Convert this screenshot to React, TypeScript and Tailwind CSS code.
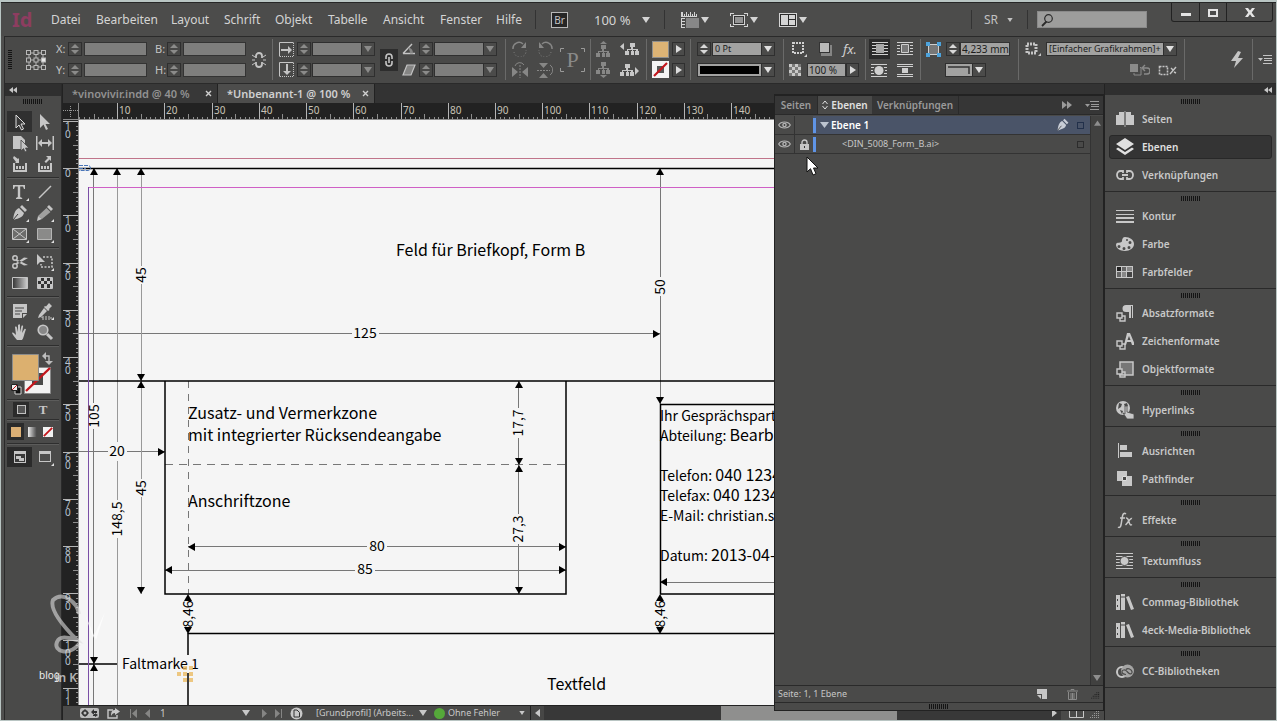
import React from 'react';

const UI = "font-['Noto_Sans','Open_Sans',sans-serif]";
const DOC = "font-['Noto_Sans_CJK_SC','Noto_Sans',sans-serif]";

/* ---------- small building blocks ---------- */

interface IconProps {
  children: React.ReactNode;
  size?: string;
  box?: string;
  className?: string;
}

const Icon: React.FC<IconProps> = ({ children, size = 'w-4 h-4', box = '0 0 16 16', className = '' }) => (
  <svg viewBox={box} className={`${size} shrink-0 ${className}`} fill="currentColor" aria-hidden="true">
    {children}
  </svg>
);

const Caret: React.FC<{ className?: string }> = ({ className = '' }) => (
  <svg viewBox="0 0 8 6" className={`h-[6px] w-[8px] shrink-0 ${className}`} fill="currentColor" aria-hidden="true">
    <path d="M0 0h8L4 6z" />
  </svg>
);

const Grip = () => (
  <svg className="h-[5px] w-5 shrink-0" viewBox="0 0 20 5" aria-hidden="true">
    {[0, 2, 4, 6, 8, 10, 12, 14, 16, 18].map((x) => (
      <rect key={x} x={x} width="1" height="5" fill="#141414" />
    ))}
  </svg>
);

const Sep: React.FC<{ className?: string }> = ({ className = '' }) => (
  <div className={`w-px shrink-0 self-stretch bg-[#6a6a69] ${className}`} />
);

const Stepper: React.FC<{ label: string; on?: boolean }> = ({ label, on }) => (
  <div
    className={`flex h-[14px] w-[14px] shrink-0 flex-col border border-[#2f2f2f] bg-[#484847] ${
      on ? 'text-[#d8d8d8]' : 'text-[#8b8b8a]'
    }`}
  >
    <button aria-label={`${label} erhöhen`} className="flex h-[6px] items-center justify-center">
      <Icon size="w-[8px] h-[4px]" box="0 0 8 4"><path d="M0 4L4 0l4 4z" /></Icon>
    </button>
    <button aria-label={`${label} verringern`} className="flex h-[6px] items-center justify-center">
      <Icon size="w-[8px] h-[4px]" box="0 0 8 4"><path d="M0 0h8L4 4z" /></Icon>
    </button>
  </div>
);

interface FieldProps {
  label: string;
  width: string;
  value?: string;
}

const Field: React.FC<FieldProps> = ({ label, width, value }) => (
  <input
    aria-label={label}
    defaultValue={value}
    className={`h-[14px] shrink-0 border border-[#333] pl-px text-[10px] leading-3 text-[#1c1c1c] ${width} ${
      value ? 'bg-[#a2a2a1]' : 'bg-[#7e7e7d]'
    }`}
  />
);

const Combo: React.FC<FieldProps & { children?: React.ReactNode }> = ({ label, width, value, children }) => {
  const on = Boolean(value || children);
  return (
    <div className={`relative h-[14px] shrink-0 ${width}`}>
      <select
        aria-label={label}
        className={`block h-[14px] w-full appearance-none border border-[#2f2f2f] pl-[2px] text-[9px] leading-3 text-[#1c1c1c] ${
          on ? 'bg-[#a2a2a1]' : 'bg-[#7e7e7d]'
        }`}
      >
        <option>{value}</option>
      </select>
      {children}
      <span
        className={`pointer-events-none absolute inset-y-0 right-0 flex w-[14px] items-center justify-center border border-[#2f2f2f] bg-[#4b4b4a] ${
          on ? 'text-[#e0e0e0]' : 'text-[#8b8b8a]'
        }`}
      >
        <Caret />
      </span>
    </div>
  );
};

const PlayButton: React.FC<{ label: string; height: string }> = ({ label, height }) => (
  <button
    aria-label={label}
    className={`flex w-[13px] shrink-0 items-center justify-center border border-[#2f2f2f] bg-[#4b4b4a] text-[#dcdcdc] ${height}`}
  >
    <Icon size="w-[6px] h-[8px]" box="0 0 6 8"><path d="M0 0l6 4-6 4z" /></Icon>
  </button>
);

/* two stacked rows of the control bar */
const Rows: React.FC<{ children: React.ReactNode; className?: string }> = ({ children, className = '' }) => (
  <div className={`flex shrink-0 flex-col [&>*]:flex [&>*]:h-[21px] [&>*]:items-center ${className}`}>{children}</div>
);

/* ---------- menu bar ---------- */

const menus = [
  { label: 'Datei', width: 'w-[45px]' },
  { label: 'Bearbeiten', width: 'w-[75px]' },
  { label: 'Layout', width: 'w-[53px]' },
  { label: 'Schrift', width: 'w-[51px]' },
  { label: 'Objekt', width: 'w-[53px]' },
  { label: 'Tabelle', width: 'w-[55px]' },
  { label: 'Ansicht', width: 'w-[57px]' },
  { label: 'Fenster', width: 'w-[56px]' },
  { label: 'Hilfe', width: 'w-[39px]' },
];

const MenuBar = () => (
  <header className="flex h-[33px] shrink-0 items-center bg-[#4c4c4b] text-[#d4d4d4]">
    <span className="ml-[11px] w-[39px] text-[20px] font-bold leading-6 text-[#8d3d60]">Id</span>
    <nav className="flex">
      {menus.map((menu) => (
        <button key={menu.label} className={`whitespace-nowrap text-left text-[12px] leading-4 ${menu.width}`}>
          {menu.label}
        </button>
      ))}
    </nav>
    <Sep className="my-[7px] bg-[#333]" />
    <button className="ml-[15px] h-4 w-[17px] border border-[#b8b8b8] bg-[#262626] text-[10px] leading-3 text-[#c4c4c4]">
      Br
    </button>
    <button className="ml-[26px] flex items-center whitespace-nowrap text-[13px] leading-4">
      <span className="w-[48px] text-left">100 %</span>
      <Caret className="w-[7px]" />
    </button>
    <Sep className="my-[7px] ml-[14px] bg-[#333]" />
    <button aria-label="Anzeigeoptionen" className="ml-4 flex items-center gap-[2px]">
      <Icon size="w-[18px] h-4" box="0 0 18 16">
        <path d="M0 0h2v4h1V2h1v2h1V0h1v4h1V2h1v2h1V0h1v4h1V2h1v2h1V0h1v4h1V2h1v3H0z" />
        <path d="M0 6h4v1H1v2h3v1H1v2h3v1H1v2h3v1H0z" />
        <path d="M5 6h13v10H5z" fill="#878787" />
      </Icon>
      <Caret className="w-[7px]" />
    </button>
    <button aria-label="Bildschirmmodus" className="ml-[21px] flex items-center gap-[2px]">
      <Icon size="w-[18px] h-4" box="0 0 18 16">
        <path d="M0 4V1h4v1H1v2zM14 1h4v3h-1V2h-3zM0 12v3h4v-1H1v-2zM14 15h4v-3h-1v2h-3z" />
        <path d="M3 3h12v10H3z" />
        <path d="M4 4h10v8H4z" fill="#333" />
        <path d="M5 5h8v6H5z" fill="#939393" />
      </Icon>
      <Caret className="w-[7px]" />
    </button>
    <button aria-label="Dokumente anordnen" className="ml-[21px] flex items-center gap-[2px]">
      <Icon size="w-[18px] h-4" box="0 0 18 16">
        <path d="M0 1h18v14H0z" />
        <path d="M1 2h16v12H1z" fill="#2b2b2b" />
        <path d="M2 3h7v10H2zM10 3h6v4h-6zM10 8h6v5h-6z" />
      </Icon>
      <Caret className="w-[7px]" />
    </button>
    <div className="flex-1" />
    <Sep className="my-[7px] bg-[#333]" />
    <button className="ml-3 flex items-center text-[12px] leading-4 text-[#c2c2c2]">
      <span className="w-[23px] text-left">SR</span>
      <Icon size="w-[6px] h-[4px]" box="0 0 8 6"><path d="M0 0h8L4 6z" /></Icon>
    </button>
    <Sep className="my-[7px] ml-[14px] bg-[#333]" />
    <label className="ml-[9px] flex h-[17px] w-[110px] items-center border border-[#8a8a8a] bg-[#9d9d9c] text-[#2a2a2a]">
      <Icon size="w-[14px] h-[14px]" box="0 0 14 14" className="ml-[2px]">
        <path d="M6.500 8.500L2 13" stroke="currentColor" strokeWidth="1.800" />
        <circle cx="8.500" cy="5.500" r="3.800" fill="none" stroke="currentColor" strokeWidth="1.200" />
      </Icon>
      <input aria-label="Suche" className="w-full min-w-0 bg-transparent text-[11px] outline-none" />
    </label>
    <div className="ml-6 mr-[3px] flex h-[19px] self-start rounded-b-[3px] border border-t-0 border-[#222] text-[#e4e4e4]">
      <button aria-label="Minimieren" className="flex w-7 items-center justify-center border-r border-[#222]">
        <Icon size="w-[10px] h-[9px]" box="0 0 10 9"><path d="M0 5h10v3H0z" /></Icon>
      </button>
      <button aria-label="Maximieren" className="flex w-[27px] items-center justify-center border-r border-[#222]">
        <Icon size="w-[10px] h-[9px]" box="0 0 10 9"><path d="M0 1h10v8H0zm2 2v4h6V3z" fillRule="evenodd" /></Icon>
      </button>
      <button aria-label="Schließen" className="flex w-[45px] items-center justify-center">
        <Icon size="w-[10px] h-[9px]" box="0 0 10 9"><path d="M0 0h3l2 2.600L7 0h3L6.700 4.500 10 9H7L5 6.300 3 9H0l3.300-4.500z" /></Icon>
      </button>
    </div>
  </header>
);

/* ---------- control bar ---------- */

const Tree = () => (
  <path d="M5 2h5v4H8v2h5v2h1v4h-4v-4h1V9H8v1h1v4H6v-4h1V9H3v1h1v4H0v-4h2V8h4V6H5z" />
);

const ControlBar = () => (
  <section aria-label="Steuerung" className="ml-[3px] flex h-12 shrink-0 items-stretch border-y border-l border-[#2a2a2a] bg-[#494948] pb-[3px] pt-[2px] text-[#c4c4c4]">
    <div className="ml-[3px] flex w-[15px] shrink-0 items-center">
      <svg className="h-5 w-[4px]" viewBox="0 0 4 20" aria-hidden="true">
        {[0, 2, 4, 6, 8, 10, 12, 14, 16, 18].map((y) => (
          <rect key={y} y={y} width="4" height="1" fill="#141414" />
        ))}
      </svg>
    </div>
    <Icon size="w-5 h-5" box="0 0 20 20" className="ml-[3px] self-center text-[#b8b8b8]">
      <path d="M3 3h14v14H3zM10 3v14M3 10h14" fill="none" stroke="currentColor" />
      {[2.5, 10, 17.5].map((x) =>
        [2.5, 10, 17.5].map((y) => (
          <rect key={`${x}-${y}`} x={x - 2} y={y - 2} width="4" height="4" fill={x > 15 && y === 10 ? '#e8e8e8' : '#494948'} stroke="currentColor" />
        ))
      )}
    </Icon>
    <Rows className="ml-[10px] text-[11px] leading-3">
      <div><span className="w-3">X:</span><Stepper label="X" /><span className="w-[2px]" /><Field label="X" width="w-[63px]" /></div>
      <div><span className="w-3">Y:</span><Stepper label="Y" /><span className="w-[2px]" /><Field label="Y" width="w-[63px]" /></div>
    </Rows>
    <Rows className="ml-[8px] text-[11px] leading-3">
      <div><span className="w-3">B:</span><Stepper label="Breite" /><span className="w-[2px]" /><Field label="Breite" width="w-[63px]" /></div>
      <div><span className="w-3">H:</span><Stepper label="Höhe" /><span className="w-[2px]" /><Field label="Höhe" width="w-[63px]" /></div>
    </Rows>
    <button aria-label="Proportionen verknüpfen" className="ml-[6px]">
      <Icon size="w-[14px] h-4" box="0 0 14 16">
        <path d="M4 6V4a3 3 0 016 0v2M4 10v2a3 3 0 006 0v-2" fill="none" stroke="currentColor" strokeWidth="1.800" />
        <path d="M0 3l3 2M0 8h3M0 13l3-2M14 3l-3 2M14 8h-3M14 13l-3-2" stroke="currentColor" />
      </Icon>
    </button>
    <Sep className="ml-[6px]" />
    <Rows className="ml-[6px]">
      {['horizontal', 'vertikal'].map((dir) => (
        <div key={dir}>
          <Icon size="w-[15px] h-[15px]" box="0 0 15 15" className="mr-[3px]">
            <path d="M.5 14.500V.5h14" fill="none" stroke="currentColor" />
            <path d="M14.500 1v13.500H1" fill="none" stroke="currentColor" strokeDasharray="1 1" />
            {dir === 'horizontal' ? <path d="M2 7h7V4l4 4-4 4V9H2z" /> : <path d="M7 2h2v7h3l-4 4-4-4h3z" />}
          </Icon>
          <Stepper label={`Skalierung ${dir}`} />
          <span className="w-px" />
          <Combo label={`Skalierung ${dir}`} width="w-[63px]" />
        </div>
      ))}
    </Rows>
    <button aria-label="Skalierung verketten" className="ml-[5px] flex h-[22px] w-[18px] shrink-0 items-center justify-center self-center bg-[#2d2d2d]">
      <Icon size="w-[10px] h-[14px]" box="0 0 10 14">
        <path d="M2 6V4a3 3 0 016 0v2M2 8v2a3 3 0 006 0V8M5 4v6" fill="none" stroke="currentColor" strokeWidth="1.600" />
      </Icon>
    </button>
    <Rows className="ml-1">
      <div>
        <Icon size="w-[15px] h-[14px]" box="0 0 15 14"><path d="M1 11.500L10 2M1 11.500h12" fill="none" stroke="currentColor" strokeWidth="1.400" /><path d="M6 6.500l1-1c3 1 4 3 4 6H8c0-2-.5-4-2-5z" fill="#858584" /></Icon>
        <span className="w-[2px]" /><Stepper label="Drehwinkel" /><span className="w-px" />
        <Combo label="Drehwinkel" width="w-[63px]" />
      </div>
      <div>
        <Icon size="w-[15px] h-[14px]" box="0 0 15 14"><path d="M5 2h8L9 12H1z" fill="#858584" stroke="currentColor" strokeWidth="1.200" /></Icon>
        <span className="w-[2px]" /><Stepper label="Scherwinkel" /><span className="w-px" />
        <Combo label="Scherwinkel" width="w-[63px]" />
      </div>
    </Rows>
    <Sep className="ml-[8px]" />
    <Rows className="ml-[6px] text-[#878786]">
      <div className="gap-[9px]">
        <Icon><path d="M1 8a6 6 0 0110-5" fill="none" stroke="currentColor" strokeWidth="1.500" /><path d="M14 1v6H9z" /><path d="M2 11a6 6 0 0012-2" fill="none" stroke="currentColor" strokeDasharray="1 2" /></Icon>
        <Icon><path d="M15 8A6 6 0 005 3" fill="none" stroke="currentColor" strokeWidth="1.500" /><path d="M2 1v6h5z" /><path d="M14 11a6 6 0 01-12-2" fill="none" stroke="currentColor" strokeDasharray="1 2" /></Icon>
      </div>
      <div className="gap-[9px]">
        <Icon><path d="M0 5v10l6-5zM16 5v10l-6-5z" /><path d="M8 3v13" stroke="currentColor" strokeDasharray="2 1" /><path d="M3 4a5 5 0 019-1" fill="none" stroke="currentColor" /></Icon>
        <Icon><path d="M2 1h9L6.500 6zM2 16h9l-4.500-5z" /><path d="M0 8.500h13" stroke="currentColor" strokeDasharray="2 1" /><path d="M13 3a6 6 0 010 10" fill="none" stroke="currentColor" /></Icon>
      </div>
    </Rows>
    <div className="ml-[7px] flex w-[25px] shrink-0 items-center justify-center self-center font-['Liberation_Serif',serif] text-[22px] leading-6 text-[#8a8a89]">
      <span className="relative">
        P
        <svg className="absolute -left-[6px] top-0 h-6 w-[25px]" viewBox="0 0 25 24" aria-hidden="true">
          <path d="M.5 4V.5H4M21 .5h3.500V4M.5 20v3.500H4M21 23.500h3.500V20" fill="none" stroke="#9a9a99" />
        </svg>
      </span>
    </div>
    <Sep className="ml-[5px]" />
    <Rows className="ml-[5px] text-[#878786]">
      <div className="gap-[8px]">
        <Icon><path d="M4 3l3.500-3L11 3z" /><g transform="translate(0 2)"><Tree /></g></Icon>
        <Icon size="w-[19px] h-4" box="0 0 19 16" className="text-[#c8c8c8]"><path d="M4 2v7L0 5.500z" /><g transform="translate(5 0)"><Tree /></g></Icon>
      </div>
      <div className="gap-[8px]">
        <Icon><g transform="translate(0 -2)"><Tree /></g><path d="M4 13h7l-3.500 3z" /></Icon>
        <Icon size="w-[19px] h-4" box="0 0 19 16" className="text-[#c8c8c8]"><Tree /><path d="M15 5v8l4-4z" /></Icon>
      </div>
    </Rows>
    <Sep className="ml-[7px]" />
    <Rows className="ml-[5px]">
      <div className="gap-[3px]">
        <button aria-label="Fläche" className="h-[17px] w-[17px] border border-[#8e8e8d] bg-[#dcb375]" />
        <PlayButton label="Flächenfarbe wählen" height="h-[14px]" />
      </div>
      <div className="gap-[3px]">
        <button aria-label="Kontur">
          <Icon size="w-[17px] h-[17px]" box="0 0 17 17">
            <path d="M0 0h17v17H0z" fill="#f4f4f4" /><path d="M5 5h7v7H5z" fill="#585857" />
            <path d="M2 15L15 2" stroke="#c4161c" strokeWidth="2.200" />
          </Icon>
        </button>
        <PlayButton label="Konturfarbe wählen" height="h-[14px]" />
      </div>
    </Rows>
    <Sep className="ml-[5px]" />
    <Rows className="ml-[6px]">
      <div><Stepper label="Konturstärke" on /><span className="w-px" /><Combo label="Konturstärke" width="w-[63px]" value="0 Pt" /></div>
      <div>
        <Combo label="Konturtyp" width="w-[78px]" value=" ">
          <span className="pointer-events-none absolute bottom-[3px] left-[3px] right-4 top-[3px] bg-black" />
        </Combo>
      </div>
    </Rows>
    <Sep className="ml-[8px]" />
    <Rows className="ml-[5px] w-[72px] text-[#d0d0d0]">
      <div className="gap-[10px] pl-[2px]">
        <Icon><path d="M2 2h10v10H2z" fill="none" stroke="currentColor" strokeWidth="2" strokeDasharray="2 1" /><path d="M16 16h-3l3-3z" /></Icon>
        <Icon><path d="M4 4h11v11H4z" fill="#858584" /><path d="M2 1h11v11H2z" fill="#333" /><path d="M3 2h9v9H3z" fill="#b9b9b8" /></Icon>
        <span className="text-[13px] italic leading-4">fx.</span>
      </div>
      <div>
        <Icon size="w-[12px] h-[12px]" box="0 0 12 12">
          <path d="M0 0h12v12H0z" fill="#c9c9c8" />
          <path d="M3 0h3v3H3zM9 0h3v3H9zM0 3h3v3H0zM6 3h3v3H6zM3 6h3v3H3zM9 6h3v3H9zM0 9h3v3H0zM6 9h3v3H6z" fill="#7a7a79" />
        </Icon>
        <span className="w-[6px]" />
        <Field label="Deckkraft" width="w-[39px]" value="100 %" />
        <PlayButton label="Deckkraft wählen" height="h-[14px]" />
      </div>
    </Rows>
    <Sep className="ml-1" />
    <Rows className="ml-[3px] text-[#cfcfcf]">
      <div className="gap-[7px]">
        <span className="flex h-5 w-[21px] items-center justify-center bg-[#2b2b2b]">
          <Icon><path d="M0 1h16v1H0zM0 4h16v1H0zM0 7h16v1H0zM0 10h16v1H0zM0 13h16v1H0z" /><path d="M4 3h8v9H4z" fill="#a8a8a8" /></Icon>
        </span>
        <Icon><path d="M0 1h16v1H0zM0 13h16v1H0zM0 4h3v1H0zM0 7h3v1H0zM0 10h3v1H0zM13 4h3v1h-3zM13 7h3v1h-3zM13 10h3v1h-3z" /><path d="M4.500 3.500h7v8h-7z" fill="#777" stroke="currentColor" /></Icon>
      </div>
      <div className="gap-[10px] pl-[2px]">
        <Icon><path d="M0 2h16v1H0zM0 14h16v1H0zM0 5h3v1H0zM0 8h2v1H0zM0 11h3v1H0zM13 5h3v1h-3zM14 8h2v1h-2zM13 11h3v1h-3z" /><circle cx="8" cy="8.500" r="4.500" /></Icon>
        <Icon><path d="M0 2h16v1H0zM0 4h16v1H0zM0 12h16v1H0zM0 14h16v1H0zM5 6h6v5H5z" /></Icon>
      </div>
    </Rows>
    <Sep className="ml-[7px]" />
    <Rows className="ml-[5px]">
      <div>
        <Icon size="w-[15px] h-[15px]" box="0 0 15 15" className="mr-[5px]">
          <path d="M2.500 2.500h10v10h-10z" fill="#777" stroke="#cfcfcf" />
          <path d="M0 0h4v4H0zM11 0h4v4h-4zM0 11h4v4H0zM11 11h4v4h-4z" fill="#4da3dc" />
        </Icon>
        <Stepper label="Eckenradius" on /><Field label="Eckenradius" width="w-[50px]" value="4,233 mm" />
      </div>
      <div className="pl-[19px]">
        <Combo label="Eckenform" width="w-[41px]" value=" ">
          <svg className="pointer-events-none absolute left-[3px] top-[3px] h-2 w-6" viewBox="0 0 24 8" aria-hidden="true">
            <path d="M0 1h21v7" fill="none" stroke="#333" strokeWidth="1.500" />
          </svg>
        </Combo>
      </div>
    </Rows>
    <Sep className="ml-[8px]" />
    <Rows className="ml-[6px] w-[152px]">
      <div>
        <Icon size="w-[17px] h-4" box="0 0 17 16" className="mr-1">
          <path d="M2 3h9v9H2z" fill="none" stroke="currentColor" strokeWidth="3" strokeDasharray="2 1" /><path d="M16 15h-3l3-3z" />
        </Icon>
        <Combo label="Objektformat" width="w-[131px]" value="[Einfacher Grafikrahmen]+" />
      </div>
      <div className="justify-end gap-[8px]">
        <Icon size="w-[21px] h-[14px]" box="0 0 21 14" className="text-[#8b8b8a]">
          <path d="M1 1h8v8H1z" /><path d="M11 4.500h1V12H5v-2" fill="none" stroke="currentColor" />
          <path d="M14 5h4a2.500 2.500 0 010 6h-3M16 2l-3 3 3 3" fill="none" stroke="currentColor" strokeWidth="1.400" />
        </Icon>
        <Icon size="w-[19px] h-[14px]" box="0 0 19 14">
          <path d="M1.500 3.500h8v8h-8z" fill="none" stroke="currentColor" strokeWidth="1.600" strokeDasharray="2 1" />
          <path d="M12 11l6-7M13 5l2 2M16 9l2 1" stroke="currentColor" strokeWidth="1.400" />
        </Icon>
      </div>
    </Rows>
    <Sep className="ml-[7px]" />
    <div className="flex-1" />
    <button aria-label="Schnell anwenden" className="mr-[9px]">
      <Icon size="w-[12px] h-[17px]" box="0 0 12 17"><path d="M7 0L0 10h5l-2 7 9-10H7l3-6z" /></Icon>
    </button>
    <Sep />
    <button aria-label="Bedienfeldmenü" className="ml-[5px] mr-[4px]">
      <Icon size="w-[14px] h-[9px]" box="0 0 14 9"><path d="M0 3h5L2.500 6zM5 0h9v1H5zM6 3h8v1H6zM6 5h8v1H6zM5 8h9v1H5z" /></Icon>
    </button>
  </section>
);

/* ---------- tool box ---------- */

interface Tool {
  name: string;
  art: React.ReactNode;
  active?: boolean;
}

const Flag = () => <path d="M18 18h-3l3-3z" fill="#e0e0e0" />;

const toolGroups: Tool[][] = [
  [
    { name: 'Auswahl', active: true, art: <path d="M5 2v13l3-3 2.500 5 2-1-2.500-5h4z" fill="#3a3a3a" stroke="#ddd" /> },
    { name: 'Direktauswahl', art: <path d="M4 1v14l3.500-3.500L10 17l2-1-2.500-5H14z" /> },
    { name: 'Seite', art: <><path d="M2 2h8l4 4v9H2z" /><path d="M10 6v11l2.500-2.500L14 18l2-1-1.500-3H18z" stroke="#444" strokeWidth=".8" /></> },
    { name: 'Lücke', art: <path d="M0 2h1.500v14H0zM16.500 2H18v14h-1.500zM2 9l4-4v3h6V5l4 4-4 4v-3H6v3z" /> },
    { name: 'Inhaltsaufnahme', art: <><path d="M2 8h2v7h10V8h2v9H2z" /><path d="M5 11h2v3H5zM8 11h2v3H8zM11 11h2v3h-2zM3 1l4 3 1-1v5H4l1-1-3-4z" /></> },
    { name: 'Inhaltsplatzierung', art: <><path d="M2 8h2v7h10V8h2v9H2z" /><path d="M5 11h2v3H5zM8 11h2v3H8zM11 11h2v3h-2zM10 1h5v5l-1.500-1.500L10 8 8.500 6.500 12 3z" /></> },
  ],
  [
    { name: 'Text', art: <><path d="M2 2h12v4h-1l-1-2.500H9.200V14l2 1v1H5v-1l1.800-1V3.500H4L3 6H2z" /><Flag /></> },
    { name: 'Linie', art: <path d="M3 15L15 3" stroke="currentColor" strokeWidth="1.500" /> },
    { name: 'Zeichenstift', art: <><path d="M11 1l5 5-2 2-5-5zM8 4l5 5c-1 4-4 5-11 7 1-7 2-10 6-12z" /><path d="M2 16l5-6" stroke="#3c3c3c" /><Flag /></> },
    { name: 'Buntstift', art: <><path d="M13 1l4 4-2 2-4-4z" /><path d="M10.500 4l4 4L6 15l-4-3z" fill="#a0a09f" /><path d="M2 12l4 3-5 2z" /><Flag /></> },
    { name: 'Rechteckrahmen', art: <><path d="M1.500 3.500h14v11h-14zM2 4l13 10M15 4L2 14" fill="#6c6c6b" stroke="currentColor" /><Flag /></> },
    { name: 'Rechteck', art: <><path d="M1.500 3.500h14v11h-14z" fill="#8a8a89" stroke="#b5b5b4" /><Flag /></> },
  ],
  [
    { name: 'Schere', art: <><circle cx="4" cy="5" r="2.200" fill="none" stroke="currentColor" strokeWidth="1.500" /><circle cx="4" cy="13" r="2.200" fill="none" stroke="currentColor" strokeWidth="1.500" /><path d="M5 6l12 6-4 .5L5 8zM5 12l12-7-4-.5L5 10z" /></> },
    { name: 'Frei transformieren', art: <><path d="M1 1v11l3-3 5 0z" /><path d="M7 4h9v10H5v-3" fill="none" stroke="currentColor" strokeWidth="1.600" strokeDasharray="2 1.500" /><Flag /></> },
    { name: 'Verlaufsfarbfeld', art: <path d="M1.500 3.500h15v11h-15z" fill="url(#fade)" stroke="#c4c4c4" /> },
    { name: 'Weiche Verlaufskante', art: <><path d="M1.500 3.500h15v11h-15z" fill="#333" stroke="#c4c4c4" /><path d="M2 4h3v3H2zM8 4h3v3H8zM14 4h2v3h-2zM5 7h3v3H5zM11 7h3v3h-3zM2 10h3v4H2zM8 10h3v4H8zM14 10h2v4h-2z" /></> },
  ],
  [
    { name: 'Notiz', art: <><path d="M2 2h14v9h-5v5H2zM12 12h4l-4 4z" /><path d="M4 6h9M4 9h7M4 12h5" stroke="#444" /></> },
    { name: 'Pipette', art: <><path d="M13 1l3 3-3 3 .5 1-1.500 1L8 5l1-1 1 .5zM8 6l3 3-6 6-3 1 1-3z" /><path d="M6 15h9v2H6z" fill="none" stroke="currentColor" strokeDasharray="2 1" /><Flag /></> },
    { name: 'Hand', art: <path d="M6 17c-2-2-4-5-5-7 1-1 2 0 4 2L4 4c1-1 2 0 2 1l1 4V2c1-1 2-1 2 0v7l1.500-6c1-1 2 0 1.500 1l-1 6 2.500-4c1-.5 2 .5 1 1.500-1.500 4-2 8-3.500 9.500z" /> },
    { name: 'Zoom', art: <><circle cx="7" cy="7" r="4.800" fill="#888" stroke="currentColor" strokeWidth="1.600" /><path d="M11 11l5 5" stroke="currentColor" strokeWidth="3" /></> },
  ],
];

const ToolLine = () => <div className="my-[3px] h-px w-full bg-[#2e2e2e] shadow-[0_1px_0_#5c5c5b]" />;

const NoneMark: React.FC<{ size: string }> = ({ size }) => (
  <Icon size={size} box="0 0 12 12">
    <path d="M0 0h12v12H0z" fill="#f2f2f2" />
    <path d="M1 11L11 1" stroke="#c4161c" strokeWidth="2.200" />
  </Icon>
);

const ToolBox = () => (
  <aside aria-label="Werkzeuge" className="ml-[3px] flex w-[58px] shrink-0 flex-col border-x border-[#2a2a2a] bg-[#4a4a49] text-[#c6c6c6]">
    <svg className="absolute h-0 w-0" aria-hidden="true">
      <defs>
        <linearGradient id="fade"><stop offset="0" stopColor="#333" /><stop offset="1" stopColor="#d0d0d0" /></linearGradient>
      </defs>
    </svg>
    <button aria-label="Werkzeuge reduzieren" className="flex h-3 items-center bg-[#2f2f2f] pl-1">
      <Icon size="w-[8px] h-[6px]" box="0 0 8 6"><path d="M4 0v6L0 3zM8 0v6L4 3z" /></Icon>
    </button>
    <div className="flex h-[15px] items-start justify-center pt-[3px]"><Grip /></div>
    <div className="flex flex-col px-[2px]">
      {toolGroups.map((group, i) => (
        <React.Fragment key={i}>
          <div className="grid grid-cols-[25px_25px]">
            {group.map((tool) => (
              <button
                key={tool.name}
                aria-label={tool.name}
                className={`flex h-[21px] items-center justify-center ${tool.active ? 'bg-[#303030]' : ''}`}
              >
                <Icon size="w-[18px] h-[18px]" box="0 0 18 18">{tool.art}</Icon>
              </button>
            ))}
          </div>
          <ToolLine />
        </React.Fragment>
      ))}
      <div className="flex h-[47px] items-center">
        <svg className="ml-[3px] h-[46px] w-[44px]" viewBox="0 0 44 46" role="img" aria-label="Fläche und Kontur">
          <path d="M14.500 17.500h26v26h-26z" fill="#f2f2f2" stroke="#8a8a8a" />
          <path d="M22 23h11v12H22z" fill="#4a4a49" />
          <path d="M16 41l24-23" stroke="#c4161c" strokeWidth="2.400" />
          <path d="M2.500 4.500h26v26h-26z" fill="#dcb06f" stroke="#8c8c8b" strokeWidth="1" />
          <path d="M35 6h4v6" fill="none" stroke="#bdbdbd" strokeWidth="1.400" />
          <path d="M36 2v8l-4-4zM35 11h8l-4 4z" fill="#bdbdbd" />
          <path d="M5 37h6v7H5z" fill="#111" stroke="#d5d5d5" />
          <path d="M1.500 34.500h6v6h-6z" fill="#eee" stroke="#222" />
          <path d="M2 40l5-5" stroke="#c4161c" />
        </svg>
      </div>
      <ToolLine />
      <div className="flex h-[13px] items-center gap-[6px] pl-[6px]">
        <button aria-label="Formatierung wirkt sich auf Rahmen aus" className="flex h-[15px] w-4 items-center justify-center bg-[#2b2b2b]">
          <span className="h-[9px] w-[9px] border border-[#c0c0c0] bg-[#555]" />
        </button>
        <button aria-label="Formatierung wirkt sich auf Text aus" className="w-4 font-['Liberation_Serif',serif] text-[13px] font-bold leading-3">T</button>
      </div>
      <ToolLine />
      <div className="flex h-[17px] items-center">
        <button aria-label="Farbe anwenden" className="flex h-[17px] w-[17px] items-center justify-center bg-[#2b2b2b]">
          <span className="h-[10px] w-[10px] bg-[#dcb075]" />
        </button>
        <button aria-label="Verlauf anwenden" className="flex h-4 w-4 items-center justify-center">
          <span className="h-[10px] w-[9px] bg-gradient-to-r from-[#eee] to-[#444]" />
        </button>
        <button aria-label="Keine anwenden" className="flex h-4 w-4 items-center justify-center"><NoneMark size="w-[10px] h-[10px]" /></button>
      </div>
      <ToolLine />
      <div className="grid grid-cols-[25px_25px]">
        <button aria-label="Normal" className="flex h-5 items-center justify-center bg-[#2b2b2b]">
          <Icon size="w-[12px] h-[12px]" box="0 0 12 12">
            <path d="M0 0h12v12H0z" /><path d="M1 3h10v8H1z" fill="#3a3a3a" /><path d="M2 5h5v3H2zM5 7h5v3H5z" />
          </Icon>
        </button>
        <button aria-label="Vorschau" className="flex h-5 items-center justify-center">
          <Icon size="w-[18px] h-[18px]" box="0 0 18 18">
            <path d="M3 3h12v11H3z" /><path d="M4 6h10v7H4z" fill="#4d4d4c" /><Flag />
          </Icon>
        </button>
      </div>
    </div>
  </aside>
);

/* ---------- rulers and page ---------- */

const TEN_MM = 47.22;
const tens = Array.from({ length: 16 }, (_, i) => i);
const ones = [1, 2, 3, 4, 5, 6, 7, 8, 9];

const RulerTop = () => (
  <svg className="h-[17px] w-full shrink-0 bg-[#222] text-[10px]" aria-hidden="true">
    <path d="M7.500 3v12M0 7.500h15" stroke="#9a9a9a" strokeDasharray="1 1" />
    <path d="M15.500 0v16" stroke="#8a8a8a" />
    <svg x="16" width="100%" height="17">
      {tens.map((t) => {
        const x = -9 + t * TEN_MM;
        return (
          <g key={t}>
            <path d={`M${Math.round(x)}.5 0v17`} stroke="#b5b5b5" />
            {t > 0 && t < 15 && <text x={Math.round(x) + 2} y="11" fill="#c9c2b6">{t * 10}</text>}
            {ones.map((o) => (
              <path key={o} d={`M${Math.round(x + (o * TEN_MM) / 10)}.5 ${o === 5 ? 11 : 14}v6`} stroke="#8e8e8e" />
            ))}
          </g>
        );
      })}
    </svg>
    <path d="M0 16.500h2000" stroke="#8e8e8e" />
  </svg>
);

const sideLabels = ['10', '0', '10', '20', '30', '40', '50', '60', '70', '80', '90', '100', '11'];

const RulerLeft = () => (
  <svg className="h-full w-4 shrink-0 border-r border-[#8e8e8e] bg-[#222] text-[10px]" aria-hidden="true">
    {sideLabels.map((label, t) => {
      const y = 1 + t * TEN_MM;
      return (
        <g key={t}>
          <path d={`M0 ${Math.round(y)}.5h16`} stroke="#b5b5b5" />
          <text fill="#b9c4d0">
            {label.split('').map((d, i) => (
              <tspan key={i} x="2" y={Math.round(y) + 9 + i * 8}>{d}</tspan>
            ))}
          </text>
          {ones.map((o) => (
            <path key={o} d={`M${o === 5 ? 10 : 13} ${Math.round(y + (o * TEN_MM) / 10)}.5h6`} stroke="#8e8e8e" />
          ))}
        </g>
      );
    })}
  </svg>
);

const headPaths = {
  up: 'M0 0l4 7h-8z',
  down: 'M0 0l4-7h-8z',
  left: 'M0 0l7-4v8z',
  right: 'M0 0l-7-4v8z',
};

const arrowHeads: [keyof typeof headPaths, number, number][] = [
  ['up', 94, 168], ['up', 117, 168], ['up', 141, 168], ['up', 660, 168],
  ['down', 141, 381], ['up', 141, 381], ['down', 141, 594],
  ['right', 660, 334], ['right', 165, 452],
  ['up', 519, 381], ['down', 519, 465], ['up', 519, 465], ['down', 519, 594],
  ['left', 188, 547], ['right', 566, 547], ['left', 165, 570], ['right', 566, 570],
  ['down', 660, 404], ['left', 660, 582],
  ['up', 188, 594], ['down', 188, 634], ['up', 660, 594], ['down', 660, 634],
  ['down', 94, 664], ['up', 94, 664],
];

const measures: { text: string; x: number; y: number; upright?: boolean }[] = [
  { text: '125', x: 365, y: 333 },
  { text: '20', x: 117, y: 451 },
  { text: '80', x: 377, y: 546 },
  { text: '85', x: 365, y: 569 },
  { text: '45', x: 141, y: 275, upright: true },
  { text: '45', x: 141, y: 488, upright: true },
  { text: '50', x: 660, y: 287, upright: true },
  { text: '105', x: 94, y: 416, upright: true },
  { text: '148,5', x: 117, y: 519, upright: true },
  { text: '17,7', x: 518, y: 423, upright: true },
  { text: '27,3', x: 518, y: 529, upright: true },
  { text: '8,46', x: 188, y: 614, upright: true },
  { text: '8,46', x: 660, y: 614, upright: true },
];

const Page = () => (
  <svg className={`h-full min-w-0 flex-1 bg-[#f5f5f5] ${DOC}`} role="img" aria-label="Geschäftsbrief DIN 5008 Form B">
    <g transform="translate(-79 -120)">
      <g fill="none" stroke="#777">
        <path d="M93.500 168v235M93.500 429v277M79 333.500h273M379 333.500h281M79 451.500h29M127 451.500h38" />
        <path d="M188 546.500h179M387 546.500h179M165 570.500h190M375 570.500h191M660 582.500h700" />
        <path d="M660.500 168v109M660.500 296v108M518.500 381v27M518.500 438v27M518.500 465v49M518.500 544v50" />
        <path d="M117.500 168v274M117.500 461v39M117.500 538v168M141.500 168v98M141.500 284v97M141.500 381v98M141.500 497v97" stroke="#999" />
        <path d="M165 464.500h401" strokeDasharray="8 6" />
        <path d="M188.500 381v213" strokeDasharray="7 6" />
      </g>
      <g fill="none" stroke="#000" strokeWidth="1.500">
        <path d="M79 168.500h1300M79 381h1300M165 381v213h401V381M660.500 594V404.500h700M660 594h700" />
        <path d="M79 664h38M188 633.500h1200M188 633v22M188 673v40" />
      </g>
      <path d="M79 158.500h1300" stroke="#c0748a" fill="none" />
      <path d="M88 187.500h1300" stroke="#cf5fc6" fill="none" />
      <path d="M88.500 187v520" stroke="#7a4fa6" fill="none" />
      <path d="M79 165.500h9a2.500 2.500 0 010 5h-9M79 168.500h7" fill="none" stroke="#4a76b8" strokeDasharray="4 1" />
      {arrowHeads.map(([dir, x, y], i) => (
        <path key={i} d={headPaths[dir]} transform={`translate(${x} ${y})`} />
      ))}
      <g className="text-[14px]" textAnchor="middle">
        {measures.map((m, i) => (
          <text key={i} transform={`translate(${m.x} ${m.y})${m.upright ? ' rotate(-90)' : ''}`} y="5">{m.text}</text>
        ))}
      </g>
      <g className="text-[16px]">
        <text x="396" y="256">Feld für Briefkopf, Form B</text>
        <text x="188" y="419">Zusatz- und Vermerkzone</text>
        <text x="188" y="441">mit integrierter Rücksendeangabe</text>
        <text x="188" y="507">Anschriftzone</text>
        <text x="547" y="690">Textfeld</text>
      </g>
      <g className="text-[14px]">
        <text x="122" y="669">Faltmarke 1</text>
        <text x="660" y="421">Ihr Gesprächspart</text>
        <text x="660" y="441">Abteilung: <tspan className="text-[16px]">Bearb</tspan></text>
        <text x="660" y="481">Telefon: <tspan className="text-[16px]">040 1234</tspan></text>
        <text x="660" y="501">Telefax: <tspan className="text-[16px]">040 1234</tspan></text>
        <text x="660" y="521">E-Mail: christian.sc</text>
        <text x="660" y="561">Datum: <tspan className="text-[16px]">2013-04-</tspan></text>
      </g>
    </g>
  </svg>
);

const DocumentTab: React.FC<{ title: string; active?: boolean; width: string }> = ({ title, active, width }) => (
  <div
    className={`flex shrink-0 items-center justify-between border-r border-[#222] pl-[9px] pr-[5px] ${width} ${
      active ? 'bg-[#4d4d4c] text-[#d0d0d0]' : 'bg-[#383838] text-[#929292]'
    }`}
  >
    <button className="whitespace-nowrap text-[11px] font-semibold leading-4">{title}</button>
    <button aria-label={`${title} schließen`} className="text-[#d0d0d0]">
      <Icon size="w-[7px] h-[7px]" box="0 0 7 7"><path d="M1 1l5 5M6 1L1 6" stroke="currentColor" strokeWidth="1.400" /></Icon>
    </button>
  </div>
);

const StatusBar = () => (
  <footer className="flex h-[15px] shrink-0 items-center border-t border-[#222] bg-[#4a4a49] text-[9px] leading-3 text-[#c8c8c8]">
    <span className="ml-[17px] flex h-[10px] w-[19px] items-center justify-center gap-[2px] rounded-[2px] bg-[#bdbdbd] text-[#333]">
      <Icon size="w-[8px] h-[8px]" box="0 0 8 8"><circle cx="4" cy="4" r="2.300" fill="none" stroke="currentColor" strokeWidth="1.600" /><path d="M4 0v8M0 4h8" stroke="currentColor" strokeDasharray="1.500 5" /></Icon>
      <Icon size="w-[7px] h-[8px]" box="0 0 7 8"><path d="M0 3l3-3v2h3v2H3v2zM7 6L4 4v1H2v2h2v1z" /></Icon>
    </span>
    <Icon size="w-[13px] h-[11px]" box="0 0 13 11" className="ml-2"><path d="M6 2H1v8h9V7" fill="none" stroke="currentColor" strokeWidth="1.400" /><path d="M8 0l5 3.500L8 7V5C6 5 5 6 4 8c0-4 1-6 4-6z" /></Icon>
    <button aria-label="Erste Seite" className="ml-[10px]"><Icon size="w-[7px] h-[9px]" box="0 0 7 9" className="text-[#858584]"><path d="M0 0h1v9H0zM7 0v9L2 4.500z" /></Icon></button>
    <button aria-label="Vorherige Seite" className="ml-[8px]"><Icon size="w-[5px] h-[9px]" box="0 0 5 9" className="text-[#858584]"><path d="M5 0v9L0 4.500z" /></Icon></button>
    <button className="ml-[10px] flex w-[90px] items-center justify-between text-[10px]"><span>1</span><Caret className="w-[7px]" /></button>
    <button aria-label="Nächste Seite" className="ml-3"><Icon size="w-[5px] h-[9px]" box="0 0 5 9" className="text-[#858584]"><path d="M0 0v9l5-4.500z" /></Icon></button>
    <button aria-label="Letzte Seite" className="ml-[8px]"><Icon size="w-[7px] h-[9px]" box="0 0 7 9" className="text-[#858584]"><path d="M6 0h1v9H6zM0 0v9l5-4.500z" /></Icon></button>
    <Icon size="w-[14px] h-[13px]" box="0 0 14 13" className="ml-[8px]"><circle cx="6.500" cy="6.500" r="6" /><path d="M4 3h3l2.500 2.500V10H4z" fill="#c8c8c8" stroke="#333" /></Icon>
    <button className="ml-[12px] flex w-[111px] items-center justify-between whitespace-nowrap">
      <span>[Grundprofil] (Arbeits...</span><Caret className="w-[7px]" />
    </button>
    <span className="ml-[7px] h-[11px] w-[11px] shrink-0 rounded-full bg-[#55a83a]" />
    <button className="ml-[3px] flex w-[77px] items-center justify-between whitespace-nowrap">
      <span>Ohne Fehler</span><Icon size="w-[6px] h-[4px]" box="0 0 8 6"><path d="M0 0h8L4 6z" /></Icon>
    </button>
    <div className="ml-[5px] flex min-w-0 flex-1 items-center self-stretch border-l border-[#222] bg-[#383838]">
      <button aria-label="Nach links" className="flex h-full w-[13px] shrink-0 items-center justify-center bg-[#474746]"><Icon size="w-[5px] h-[8px]" box="0 0 5 8"><path d="M5 0v8L0 4z" /></Icon></button>
      <div className="h-full w-1/3" />
      <div className="h-full w-1/3 bg-[#8f8f8e]" />
      <div className="flex-1" />
      <button aria-label="Nach rechts" className="flex w-[13px] shrink-0 items-center justify-center"><Icon size="w-[5px] h-[8px]" box="0 0 5 8"><path d="M0 0v8l5-4z" /></Icon></button>
    </div>
    <Icon size="w-[15px] h-[10px]" box="0 0 15 10" className="ml-2"><path d="M.5 0v9.500h14V0M7.500 0v9.500" fill="none" stroke="currentColor" /></Icon>
    <Icon size="w-[10px] h-[9px]" box="0 0 10 9" className="ml-[6px] mr-[4px] text-[#999]"><path d="M0 8h1v1H0zM2 8h1v1H2zM4 8h1v1H4zM6 8h1v1H6zM8 8h1v1H8zM2 6h1v1H2zM4 6h1v1H4zM6 6h1v1H6zM8 6h1v1H8zM4 4h1v1H4zM6 4h1v1H6zM8 4h1v1H8zM6 2h1v1H6zM8 2h1v1H8z" /></Icon>
  </footer>
);

/* ---------- layers panel ---------- */

const Eye = () => (
  <Icon size="w-[13px] h-[10px]" box="0 0 13 10" className="text-[#b4b4b4]">
    <path d="M.7 5C3 1 10 1 12.300 5 10 9 3 9 .7 5z" fill="none" stroke="currentColor" strokeWidth="1.200" />
    <circle cx="6.500" cy="5" r="2.300" />
    <circle cx="6.500" cy="5" r=".9" fill="#3c3c3c" />
  </Icon>
);

const LayersPanel = () => (
  <section
    aria-label="Ebenen"
    className="absolute -bottom-px right-0 top-0 mb-[10px] mt-[10px] flex w-[330px] flex-col border border-t-2 border-[#222] bg-[#4a4a49] text-[#c6c6c6]"
  >
    <div className="flex h-[18px] shrink-0 items-stretch bg-[#363636] text-[10px] font-semibold leading-4 text-[#9a9a9a]">
      <button className="w-[43px] border-r border-[#2a2a2a]">Seiten</button>
      <button className="flex w-[54px] items-center justify-center gap-[3px] bg-[#4a4a49] text-[#e0e0e0]">
        <Icon size="w-[6px] h-[10px]" box="0 0 6 10"><path d="M.5 4L3 1l2.500 3M.5 6L3 9l2.500-3" fill="none" stroke="currentColor" /></Icon>
        Ebenen
      </button>
      <button className="w-[87px] border-r border-[#2a2a2a]">Verknüpfungen</button>
      <div className="flex-1" />
      <button aria-label="Bedienfeld reduzieren"><Icon size="w-[10px] h-[8px]" box="0 0 10 8"><path d="M0 0l5 4-5 4zM5 0l5 4-5 4z" /></Icon></button>
      <button aria-label="Bedienfeldmenü" className="ml-[13px] mr-[4px]">
        <Icon size="w-[14px] h-[9px]" box="0 0 14 9"><path d="M0 3h5L2.500 6zM5 0h9v1H5zM6 3h8v1H6zM6 5h8v1H6zM5 8h9v1H5z" /></Icon>
      </button>
    </div>
    <div className="flex min-h-0 flex-1 border-t border-[#2a2a2a] pt-px">
      <ul className="min-w-0 flex-1 leading-4">
        <li className="flex h-[19px] items-center border-b border-[#333] bg-[#4a5468] text-white">
          <button aria-label="Ebene 1 ausblenden" className="flex h-full w-5 items-center justify-center border-r border-[#333] bg-[#4a4a49]"><Eye /></button>
          <span className="h-full w-[18px] bg-[#4a4a49]" />
          <span className="h-[15px] w-[3px] bg-[#5f94e6]" />
          <Icon size="w-[9px] h-[6px]" box="0 0 9 6" className="ml-1 text-[#bcc4d0]"><path d="M0 0h9L4.500 6z" /></Icon>
          <span className="ml-[2px] flex-1 text-[10px] font-semibold">Ebene 1</span>
          <Icon size="w-[14px] h-[14px]" box="0 0 18 18" className="text-[#c8cdd6]"><path d="M11 1l5 5-2 2-5-5zM8 4l5 5c-1 4-4 5-11 7 1-7 2-10 6-12z" /><path d="M2 16l5-6" stroke="#3c3c3c" /></Icon>
          <span className="ml-[7px] mr-[6px] h-[7px] w-[7px] border border-[#22304a]" />
        </li>
        <li className="flex h-[19px] items-center border-b border-[#333]">
          <button aria-label="Objekt ausblenden" className="flex h-full w-5 items-center justify-center border-r border-[#333]"><Eye /></button>
          <button aria-label="Objekt entsperren" className="flex w-[18px] justify-center">
            <Icon size="w-[9px] h-[11px]" box="0 0 9 11"><path d="M2 5V3.500a2.500 2.500 0 015 0V5" fill="none" stroke="currentColor" strokeWidth="1.400" /><path d="M0 5h9v6H0z" /><path d="M4 7h1v2H4z" fill="#333" /></Icon>
          </button>
          <span className="h-[15px] w-[3px] bg-[#5f94e6]" />
          <span className="ml-[26px] flex-1 text-[9px]">&lt;DIN_5008_Form_B.ai&gt;</span>
          <span className="mr-[6px] h-[7px] w-[7px] border border-[#2c2c2c]" />
        </li>
      </ul>
      <div className="flex w-[13px] shrink-0 flex-col items-center justify-between border-l border-[#333] bg-[#414140] py-[4px] text-[#8e8e8e]">
        <button aria-label="Nach oben"><Icon size="w-[7px] h-[6px]" box="0 0 8 6"><path d="M0 6h8L4 0z" /></Icon></button>
        <button aria-label="Nach unten"><Caret className="w-[7px]" /></button>
      </div>
    </div>
    <div className="flex h-[17px] shrink-0 items-center border-t border-[#2a2a2a] px-[3px] text-[9px] leading-3">
      <span className="flex-1">Seite: 1, 1 Ebene</span>
      <button aria-label="Neue Ebene"><Icon size="w-[10px] h-[10px]" box="0 0 10 10"><path d="M0 0h10v10H5V5H0zM0 6h4v4z" /></Icon></button>
      <button aria-label="Ebene löschen" className="ml-5 text-[#8b8b8a]">
        <Icon size="w-[11px] h-[11px]" box="0 0 11 11"><path d="M0 2h11M4 1.500V.5h3v1M1.500 3v7.500h8V3M4 4v6M5.500 4v6M7 4v6" fill="none" stroke="currentColor" /></Icon>
      </button>
      <Icon size="w-[9px] h-[9px]" box="0 0 10 9" className="ml-[13px] text-[#1c1c1c]"><path d="M0 8h1v1H0zM2 8h1v1H2zM4 8h1v1H4zM6 8h1v1H6zM8 8h1v1H8zM2 6h1v1H2zM4 6h1v1H4zM6 6h1v1H6zM8 6h1v1H8zM4 4h1v1H4zM6 4h1v1H6zM8 4h1v1H8zM6 2h1v1H6zM8 2h1v1H8z" /></Icon>
    </div>
    <div className="flex h-2 shrink-0 items-center justify-center border-t border-[#2a2a2a]"><Grip /></div>
    {/* mouse pointer */}
    <svg className="absolute left-[31px] top-[60px] h-5 w-[13px]" viewBox="0 0 13 20" aria-hidden="true">
      <path d="M1 1v15l3.500-3.300L7 19l3-1.300L7.500 12H12z" fill="#fff" stroke="#111" />
    </svg>
  </section>
);

/* ---------- panel dock ---------- */

const Books = () => (
  <>
    <path d="M0 2h4v15H0zM5 1h4v16H5zM10 4l3-1 5 13-3 1z" />
    <path d="M1.500 6v2M1.500 12v2M5 4h4" stroke="#444" />
  </>
);

const FormatBadge = () => (
  <>
    <path d="M4 12h5v5H4z" fill="none" stroke="currentColor" strokeWidth="1.400" />
    <path d="M1 9h5v5H1z" fill="#4a4a49" stroke="currentColor" strokeWidth="1.400" />
  </>
);

interface DockItem {
  label: string;
  art: React.ReactNode;
  active?: boolean;
}

const dockGroups: DockItem[][] = [
  [
    { label: 'Seiten', art: <path d="M3 2h5v13H0V5h3zM10 2h5v3h3v10h-8zM8.600 1h.8v16h-.8z" /> },
    { label: 'Ebenen', active: true, art: <path d="M9 0l9 6-9 6-9-6zM2 9.500L0 11l9 6 9-6-2-1.500-7 4.500z" /> },
    { label: 'Verknüpfungen', art: <path d="M7 7V5H4.500a3.500 4 0 000 8H7v-2M11 7V5h2.500a3.500 4 0 010 8H11v-2M6 9h6" fill="none" stroke="currentColor" strokeWidth="1.800" /> },
  ],
  [
    { label: 'Kontur', art: <path d="M0 3h18v1H0zM0 7h18v1H0zM0 10h18v2H0zM0 14h18v2H0z" /> },
    { label: 'Farbe', art: <path fillRule="evenodd" d="M9 2c5 0 9 3 9 7s-4 7-9 7-9-3-9-6c0-4 6-1 6-4 0-2 1-4 3-4zM3 10a1.500 1.500 0 100 3 1.500 1.500 0 000-3zm5 2a1.500 1.500 0 100 3 1.500 1.500 0 000-3zm5-1a1.500 1.500 0 100 3 1.500 1.500 0 000-3zm1-5a1.500 1.500 0 100 3 1.500 1.500 0 000-3zm-3-2a1 1 0 100 2 1 1 0 000-2z" /> },
    { label: 'Farbfelder', art: <><path d="M0 3h17v12H0z" /><path d="M1 4h4v4H1z" fill="#222" /><path d="M6 4h4v4H6zM1 9h4v5H1z" fill="#666" /><path d="M11 4h5v4h-5zM6 9h4v5H6z" fill="#888" /><path d="M11 9h5v5h-5z" fill="#444" /></> },
  ],
  [
    { label: 'Absatzformate', art: <><path d="M10 1h7v13h-1V2h-1v12h-2V8h-3a3.500 3.500 0 010-7z" /><FormatBadge /></> },
    { label: 'Zeichenformate', art: <><path fillRule="evenodd" d="M11 1h3l5 12h-3l-1-3h-4l-1 3H8zM11.500 8h3l-1.500-4z" /><FormatBadge /></> },
    { label: 'Objektformate', art: <><path d="M4 2h13v13H4z" fill="#777" stroke="currentColor" strokeWidth="1.500" /><FormatBadge /></> },
  ],
  [
    { label: 'Hyperlinks', art: <><circle cx="7" cy="7" r="7" /><path d="M3 2l3 1-1 3-3 2zM8 3l3-1 1 3-3 1zM4 9l3 1-1 3z" fill="#4a4a49" /><path d="M9 5h2v6l7 2v5h-7l-4-6 2 1z" stroke="#4a4a49" strokeWidth=".8" /></> },
  ],
  [
    { label: 'Ausrichten', art: <path d="M2 1h1v15H2zM4 3h7v5H4zM4 10h12v5H4z" /> },
    { label: 'Pathfinder', art: <><path d="M1 1h10v10H1z" /><path d="M6 6h10v10H6z" /><path d="M6.500 6.500h4v4h-4z" fill="#4a4a49" stroke="#ddd" /></> },
  ],
  [
    { label: 'Effekte', art: <path d="M10 3c-2-1.500-3 0-3.500 2L5 14c-.4 2-1.500 3-3 2M4 7h5M10 7c2-.5 2 1 3 4s1.500 3.500 3 2.500M16 7.500C14 6.500 12 12 9.500 14" fill="none" stroke="currentColor" strokeWidth="1.500" /> },
  ],
  [
    { label: 'Textumfluss', art: <><path d="M0 1h17v1H0zM0 4h17v1H0zM0 7h4v1H0zM0 10h4v1H0zM0 13h17v1H0zM0 16h17v1H0zM13 7h4v1h-4zM13 10h4v1h-4z" /><circle cx="8.500" cy="9" r="4.500" stroke="#4a4a49" /></> },
  ],
  [
    { label: 'Commag-Bibliothek', art: <Books /> },
    { label: '4eck-Media-Bibliothek', art: <Books /> },
  ],
  [
    { label: 'CC-Bibliotheken', art: <><circle cx="6" cy="10" r="5" fill="none" stroke="currentColor" strokeWidth="2" /><circle cx="11.500" cy="9" r="6.500" fill="#a5a5a4" /><path d="M10 12.500c-3 0-4-1.500-4-3s3-2.500 5 0l1.500 1.500c2 2 4 .5 3.500-1.500s-4-4-6-2" fill="none" stroke="#4a4a49" strokeWidth="1.200" /></> },
  ],
];

const Dock = () => (
  <aside aria-label="Bedienfelder" className="flex w-[171px] shrink-0 flex-col bg-[#4a4a49] text-[#c8c8c8]">
    <button aria-label="Bedienfelder erweitern" className="flex h-[11px] shrink-0 items-center justify-end bg-[#2f2f2f] pr-1">
      <Icon size="w-[8px] h-[6px]" box="0 0 8 6"><path d="M4 0v6L0 3zM8 0v6L4 3z" /></Icon>
    </button>
    {dockGroups.map((group, i) => (
      <div key={i} className="flex shrink-0 flex-col border-b border-[#2a2a2a] px-1 pb-[2px]">
        <div className="flex h-[10px] items-center justify-center pt-[2px]"><Grip /></div>
        {group.map((item) => (
          <button
            key={item.label}
            className={`flex items-center text-left ${
              item.active
                ? 'my-[2px] h-6 rounded-[3px] border border-[#282828] bg-[#343434] pl-[6px] text-[#e0e0e0]'
                : 'h-7 pl-[7px]'
            }`}
          >
            <Icon size="w-[18px] h-[18px]" box="0 0 18 18">{item.art}</Icon>
            <span className="ml-2 whitespace-nowrap text-[10px] font-semibold leading-4">{item.label}</span>
          </button>
        ))}
      </div>
    ))}
  </aside>
);

/* ---------- translucent channel logo ---------- */

const Watermark = () => (
  <div className="pointer-events-none absolute left-[38px] top-[510px] h-[92px] w-[165px] text-white" aria-hidden="true">
    <svg className="h-full w-full" viewBox="0 0 165 92">
      <path d="M40 50C30 62 14 58 18 48 21 41 30 44 38 46 26 34 10 16 14 6c10-9 24 2 26 14" fill="none" stroke="#ddd" strokeWidth="4" opacity=".6" />
      <path d="M46 20l8 24 12-26-9 28z" fill="#fff" opacity=".7" />
      <text x="0" y="85" fontSize="10" fill="#eee">blog</text>
      <text x="16" y="88" fontSize="12" fontWeight="600" fill="#e0e0e0" opacity=".75">in K</text>
      <g fill="#e9b75a" opacity=".75">
        <path d="M144 72h4v4h-4zM150 72h4v4h-4zM144 78h4v4h-4zM138 78h4v4h-4zM150 78h4v4h-4zM144 84h4v4h-4zM150 84h4v4h-4z" />
      </g>
    </svg>
  </div>
);

export default function App() {
  return (
    <div className={`flex h-screen flex-col overflow-hidden border border-t-2 border-[#b9c5c3] bg-[#4f4f4e] ${UI}`}>
      <div className="h-px shrink-0 bg-[#262626]" />
      <MenuBar />
      <ControlBar />
      <main className="relative flex min-h-0 flex-1">
        <ToolBox />
        <div className="relative flex min-w-0 flex-1 flex-col border-x border-[#222] bg-[#333]">
          <div className="flex h-[19px] shrink-0">
            <DocumentTab title="*vinovivir.indd @ 40 %" width="w-[155px]" />
            <DocumentTab title="*Unbenannt-1 @ 100 %" active width="w-[157px]" />
          </div>
          <div className="mr-[328px] flex min-h-0 flex-1 flex-col">
            <RulerTop />
            <div className="flex min-h-0 flex-1">
              <RulerLeft />
              <Page />
            </div>
          </div>
          <StatusBar />
          <LayersPanel />
        </div>
        <Dock />
        <Watermark />
      </main>
    </div>
  );
}
